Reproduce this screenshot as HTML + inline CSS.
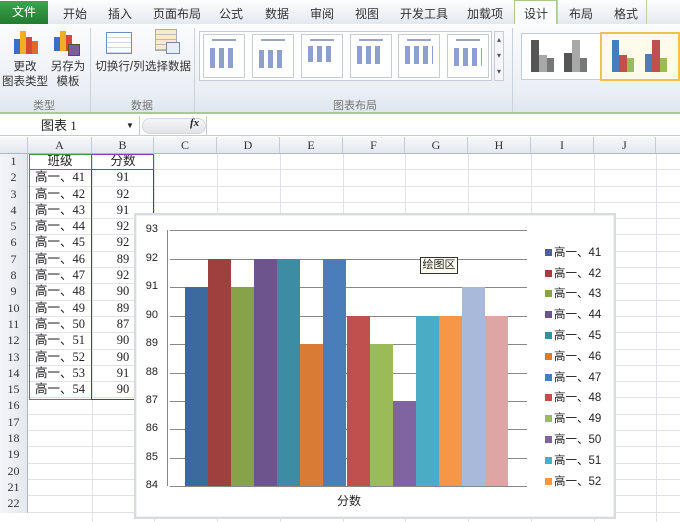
<!DOCTYPE html>
<html><head><meta charset="utf-8"><style>
*{margin:0;padding:0;box-sizing:border-box}
body{width:680px;height:522px;overflow:hidden;background:#fff;font-family:"Liberation Sans","Noto Sans CJK SC",sans-serif;font-size:12px;color:#222;position:relative}
.a{position:absolute}
.tab{position:absolute;top:5px;font-size:12px;color:#333}
.rib{position:absolute;left:0;top:24px;width:680px;height:90px;background:linear-gradient(#fbfcfd,#e9eef4 80%,#dfe6ee);border-bottom:2px solid #a9c98f}
.gl{position:absolute;top:73px;font-size:11px;color:#777}
.sep{position:absolute;top:4px;width:1px;height:84px;background:#c9d3de}
.lbl{position:absolute;font-size:11.5px;color:#333;text-align:center;line-height:15px;white-space:nowrap}
.thumb{position:absolute;top:10px;width:42px;height:44px;background:#fff;border:1px solid #c5ccd6}
.tt{position:absolute;height:2px;background:#9aa6c0}
.colh{position:absolute;top:137px;height:17px;background:linear-gradient(#f6f8fa,#e4e9ef);border-right:1px solid #c4ccd6;border-bottom:1px solid #aeb8c4;text-align:center;font-family:"Liberation Serif",serif;font-size:12px;line-height:17px;color:#333}
.rows{position:absolute;left:0;top:154px;width:680px}
.r{height:16.3px;border-bottom:1px solid #dfe3e8;position:relative;font-size:12.5px;line-height:15px;font-family:"Liberation Serif","Noto Sans CJK SC",serif}
.rh{position:absolute;left:0;top:0;width:28px;height:16.3px;background:linear-gradient(90deg,#f3f5f8,#e4e9ef);border-right:1px solid #aeb8c4;text-align:center;font-size:12px;color:#333}
.ca{position:absolute;left:28px;width:64px;text-align:center}
.cb{position:absolute;left:92px;width:62px;text-align:center}
.vl{position:absolute;top:154px;width:1px;height:368px;background:#dfe3e8}
.bar{position:absolute;width:23px}
.yl{position:absolute;left:140px;width:18px;text-align:right;font-size:11px;color:#222}
.hl{position:absolute;left:170px;width:357px;height:1px;background:#888}
.lg{position:absolute;left:545px;font-size:11.5px;color:#222}
.lg i{display:inline-block;width:7px;height:7px;margin-right:2px;vertical-align:0px}
</style></head><body>
<div class="a" style="left:0;top:0;width:680px;height:25px;background:linear-gradient(#fdfdfe,#e4e9ef);border-bottom:1px solid #b9c9a8"></div>
<div class="a" style="left:0;top:1px;width:48px;height:24px;background:linear-gradient(#3fa34c,#1f7a2e);color:#fff;text-align:center;line-height:22px;font-size:12px">文件</div>
<div class="tab" style="left:63px">开始</div>
<div class="tab" style="left:108px">插入</div>
<div class="tab" style="left:153px">页面布局</div>
<div class="tab" style="left:219px">公式</div>
<div class="tab" style="left:265px">数据</div>
<div class="tab" style="left:310px">审阅</div>
<div class="tab" style="left:355px">视图</div>
<div class="tab" style="left:400px">开发工具</div>
<div class="tab" style="left:467px">加载项</div>
<div class="a" style="left:514px;top:0;width:43px;height:26px;background:#fafcfd;border:1px solid #a9c98f;border-bottom:none"></div>
<div class="tab" style="left:524px">设计</div>
<div class="tab" style="left:569px">布局</div>
<div class="tab" style="left:614px">格式</div>
<div class="a" style="left:557px;top:0;width:1px;height:24px;background:#b9d6a8"></div>
<div class="a" style="left:646px;top:0;width:1px;height:24px;background:#b9d6a8"></div>
<div class="rib">
 <div class="a" style="left:14px;top:5px"><div class="a" style="left:0;top:10px;width:6px;height:15px;background:#3a6fc4"></div><div class="a" style="left:6px;top:2px;width:6px;height:23px;background:#f0b020"></div><div class="a" style="left:12px;top:8px;width:6px;height:17px;background:#d9492e"></div><div class="a" style="left:18px;top:12px;width:6px;height:13px;background:#e46a2a"></div></div>
 <div class="lbl" style="left:0px;top:36px;width:50px">更改<br>图表类型</div>
 <div class="a" style="left:54px;top:5px"><div class="a" style="left:0;top:8px;width:6px;height:14px;background:#3a6fc4"></div><div class="a" style="left:6px;top:2px;width:6px;height:20px;background:#f0b020"></div><div class="a" style="left:12px;top:6px;width:6px;height:16px;background:#d9492e"></div><div class="a" style="left:14px;top:15px;width:12px;height:12px;background:#7a5ea0;border:1px solid #553"></div></div>
 <div class="lbl" style="left:48px;top:36px;width:40px">另存为<br>模板</div>
 <div class="gl" style="left:33px">类型</div>
 <div class="sep" style="left:90px"></div>
 <div class="a" style="left:106px;top:8px;width:26px;height:22px;border:1px solid #6b8fb8;background:repeating-linear-gradient(#fff 0 4px,#c9d8ea 4px 5px)"></div>
 <div class="a" style="left:155px;top:5px;width:22px;height:22px;border:1px solid #aab;background:repeating-linear-gradient(#fde9cc 0 4px,#bbb 4px 5px)"></div>
 <div class="a" style="left:166px;top:18px;width:14px;height:12px;border:1px solid #789;background:#e6eef8"></div>
 <div class="lbl" style="left:95px;top:36px;width:50px">切换行/列</div>
 <div class="lbl" style="left:145px;top:36px;width:45px">选择数据</div>
 <div class="gl" style="left:131px">数据</div>
 <div class="sep" style="left:194px"></div>
 <div class="a" style="left:199px;top:7px;width:293px;height:50px;background:#fff;border:1px solid #c5ccd6"></div>
 <div class="thumb" style="left:203px"></div><div class="thumb" style="left:252px"></div><div class="thumb" style="left:301px"></div><div class="thumb" style="left:350px"></div><div class="thumb" style="left:398px"></div><div class="thumb" style="left:447px"></div>
 <div class="tt" style="left:212px;top:15px;width:24px"></div><div class="tt" style="left:261px;top:15px;width:24px"></div><div class="tt" style="left:310px;top:15px;width:24px"></div><div class="tt" style="left:359px;top:15px;width:24px"></div><div class="tt" style="left:407px;top:15px;width:24px"></div><div class="tt" style="left:456px;top:15px;width:24px"></div>
 <div class="a" style="left:210px;top:24px;width:24px;height:20px;background:repeating-linear-gradient(90deg,#8ea0cf 0 5px,#fff 5px 9px)"></div>
 <div class="a" style="left:259px;top:26px;width:26px;height:18px;background:repeating-linear-gradient(90deg,#8ea0cf 0 5px,#fff 5px 9px)"></div>
 <div class="a" style="left:308px;top:22px;width:26px;height:16px;background:repeating-linear-gradient(90deg,#8ea0cf 0 5px,#fff 5px 9px)"></div>
 <div class="a" style="left:357px;top:22px;width:26px;height:18px;background:repeating-linear-gradient(90deg,#8ea0cf 0 5px,#fff 5px 9px)"></div>
 <div class="a" style="left:405px;top:22px;width:28px;height:18px;background:repeating-linear-gradient(90deg,#8ea0cf 0 5px,#fff 5px 9px)"></div>
 <div class="a" style="left:454px;top:24px;width:28px;height:18px;background:repeating-linear-gradient(90deg,#8ea0cf 0 5px,#fff 5px 9px)"></div>
 <div class="a" style="left:494px;top:7px;width:10px;height:50px;border:1px solid #c5ccd6;background:#f4f6f9;font-size:8px;text-align:center;line-height:16px;color:#555">▴<br>▾<br>▾</div>
 <div class="gl" style="left:333px">图表布局</div>
 <div class="sep" style="left:512px"></div>
 <div class="a" style="left:521px;top:9px;width:159px;height:47px;background:#fff;border:1px solid #c5ccd6"></div>
 <div class="a" style="left:600px;top:8px;width:80px;height:49px;border:2px solid #f2c34a;background:#fffbea"></div>
 <div class="a" style="left:531px;top:16px;width:8px;height:32px;background:#555"></div><div class="a" style="left:539px;top:31px;width:8px;height:17px;background:#a8a8a8"></div><div class="a" style="left:547px;top:34px;width:7px;height:14px;background:#777"></div>
 <div class="a" style="left:564px;top:29px;width:8px;height:19px;background:#555"></div><div class="a" style="left:572px;top:16px;width:8px;height:32px;background:#a8a8a8"></div><div class="a" style="left:580px;top:34px;width:7px;height:14px;background:#777"></div>
 <div class="a" style="left:612px;top:16px;width:7px;height:32px;background:#4a7ebb"></div><div class="a" style="left:619px;top:31px;width:8px;height:17px;background:#c0504d"></div><div class="a" style="left:627px;top:34px;width:7px;height:14px;background:#9bbb59"></div>
 <div class="a" style="left:645px;top:30px;width:7px;height:18px;background:#4a7ebb"></div><div class="a" style="left:652px;top:16px;width:8px;height:32px;background:#c0504d"></div><div class="a" style="left:660px;top:34px;width:7px;height:14px;background:#9bbb59"></div>
</div>
<div class="a" style="left:0;top:116px;width:680px;height:20px;background:#fff;border-bottom:1px solid #c4ccd6"></div>
<div class="a" style="left:0;top:116px;width:140px;height:19px;border-right:1px solid #c4ccd6;font-family:'Liberation Serif','Noto Sans CJK SC',serif;font-size:13px;line-height:19px;padding-left:41px">图表 1<span style="position:absolute;left:126px;font-size:8px">▼</span></div>
<div class="a" style="left:142px;top:118px;width:64px;height:16px;border-radius:8px;background:linear-gradient(#f4f5f7,#e1e4e8);border:1px solid #d5d8dd"></div>
<div class="a" style="left:190px;top:117px;font-family:'Liberation Serif',serif;font-style:italic;font-weight:bold;font-size:11px">fx</div>
<div class="a" style="left:206px;top:116px;width:1px;height:20px;background:#c4ccd6"></div>
<div class="colh" style="left:0;width:28px"></div>
<div class="colh" style="left:28px;width:64px">A</div>
<div class="colh" style="left:92px;width:62px">B</div>
<div class="colh" style="left:154px;width:63px">C</div>
<div class="colh" style="left:217px;width:63px">D</div>
<div class="colh" style="left:280px;width:63px">E</div>
<div class="colh" style="left:343px;width:62px">F</div>
<div class="colh" style="left:405px;width:63px">G</div>
<div class="colh" style="left:468px;width:63px">H</div>
<div class="colh" style="left:531px;width:63px">I</div>
<div class="colh" style="left:594px;width:62px">J</div>
<div class="colh" style="left:656px;width:30px"></div>
<div class="vl" style="left:92px"></div><div class="vl" style="left:154px"></div><div class="vl" style="left:217px"></div><div class="vl" style="left:280px"></div><div class="vl" style="left:343px"></div><div class="vl" style="left:405px"></div><div class="vl" style="left:468px"></div><div class="vl" style="left:531px"></div><div class="vl" style="left:594px"></div><div class="vl" style="left:656px"></div>
<div class="rows">
<div class="r"><div class="rh">1</div><div class="ca">班级</div><div class="cb">分数</div></div>
<div class="r"><div class="rh">2</div><div class="ca">高一、41</div><div class="cb">91</div></div>
<div class="r"><div class="rh">3</div><div class="ca">高一、42</div><div class="cb">92</div></div>
<div class="r"><div class="rh">4</div><div class="ca">高一、43</div><div class="cb">91</div></div>
<div class="r"><div class="rh">5</div><div class="ca">高一、44</div><div class="cb">92</div></div>
<div class="r"><div class="rh">6</div><div class="ca">高一、45</div><div class="cb">92</div></div>
<div class="r"><div class="rh">7</div><div class="ca">高一、46</div><div class="cb">89</div></div>
<div class="r"><div class="rh">8</div><div class="ca">高一、47</div><div class="cb">92</div></div>
<div class="r"><div class="rh">9</div><div class="ca">高一、48</div><div class="cb">90</div></div>
<div class="r"><div class="rh">10</div><div class="ca">高一、49</div><div class="cb">89</div></div>
<div class="r"><div class="rh">11</div><div class="ca">高一、50</div><div class="cb">87</div></div>
<div class="r"><div class="rh">12</div><div class="ca">高一、51</div><div class="cb">90</div></div>
<div class="r"><div class="rh">13</div><div class="ca">高一、52</div><div class="cb">90</div></div>
<div class="r"><div class="rh">14</div><div class="ca">高一、53</div><div class="cb">91</div></div>
<div class="r"><div class="rh">15</div><div class="ca">高一、54</div><div class="cb">90</div></div>
<div class="r"><div class="rh">16</div></div><div class="r"><div class="rh">17</div></div><div class="r"><div class="rh">18</div></div><div class="r"><div class="rh">19</div></div><div class="r"><div class="rh">20</div></div><div class="r"><div class="rh">21</div></div><div class="r"><div class="rh">22</div></div>
</div>
<div class="a" style="left:29px;top:154px;width:63px;height:16px;border:1px solid #3a9a3a;border-right:none"></div>
<div class="a" style="left:29px;top:170px;width:63px;height:230px;border:1px solid #3a9a3a;border-right:none;border-top:none"></div>
<div class="a" style="left:91px;top:154px;width:63px;height:16px;border:1px solid #8a3bc4"></div>
<div class="a" style="left:91px;top:170px;width:63px;height:230px;border:1px solid #3a3ac4;border-top:none"></div>
<div class="a" style="left:134px;top:213px;width:482px;height:306px;border:2px solid #d8dbe0;background:#fff;box-shadow:inset 0 0 0 1px #eef0f2"></div>
<div class="a" style="left:167px;top:230px;width:1px;height:256px;background:#888"></div>
<div class="hl" style="top:230px"></div><div class="hl" style="top:259px"></div><div class="hl" style="top:287px"></div><div class="hl" style="top:316px"></div><div class="hl" style="top:344px"></div><div class="hl" style="top:373px"></div><div class="hl" style="top:401px"></div><div class="hl" style="top:429px"></div><div class="hl" style="top:458px"></div><div class="hl" style="top:486px"></div>
<div class="yl" style="top:223px">93</div><div class="yl" style="top:252px">92</div><div class="yl" style="top:280px">91</div><div class="yl" style="top:309px">90</div><div class="yl" style="top:337px">89</div><div class="yl" style="top:366px">88</div><div class="yl" style="top:394px">87</div><div class="yl" style="top:422px">86</div><div class="yl" style="top:451px">85</div><div class="yl" style="top:479px">84</div>
<div class="bar" style="left:185px;top:287px;height:199px;background:#3c6a9e"></div>
<div class="bar" style="left:208px;top:259px;height:227px;background:#a0403e"></div>
<div class="bar" style="left:231px;top:287px;height:199px;background:#87a34a"></div>
<div class="bar" style="left:254px;top:259px;height:227px;background:#6e548d"></div>
<div class="bar" style="left:277px;top:259px;height:227px;background:#3c8da3"></div>
<div class="bar" style="left:300px;top:344px;height:142px;background:#d97b34"></div>
<div class="bar" style="left:323px;top:259px;height:227px;background:#4a7ebb"></div>
<div class="bar" style="left:347px;top:316px;height:170px;background:#c0504d"></div>
<div class="bar" style="left:370px;top:344px;height:142px;background:#9bbb59"></div>
<div class="bar" style="left:393px;top:401px;height:85px;background:#8064a2"></div>
<div class="bar" style="left:416px;top:316px;height:170px;background:#4bacc6"></div>
<div class="bar" style="left:439px;top:316px;height:170px;background:#f79646"></div>
<div class="bar" style="left:462px;top:287px;height:199px;background:#a9b9da"></div>
<div class="bar" style="left:485px;top:316px;height:170px;background:#dda5a4"></div>
<div class="a" style="left:420px;top:257px;width:38px;height:17px;border:1px solid #333;background:#fffff0;font-size:11px;line-height:15px;text-align:center">绘图区</div>
<div class="a" style="left:337px;top:492px;font-size:12px">分数</div>
<div class="lg" style="top:244px"><i style="background:#4f5f9e"></i>高一、41</div>
<div class="lg" style="top:265px"><i style="background:#a0403e"></i>高一、42</div>
<div class="lg" style="top:285px"><i style="background:#87a34a"></i>高一、43</div>
<div class="lg" style="top:306px"><i style="background:#6e548d"></i>高一、44</div>
<div class="lg" style="top:327px"><i style="background:#3c8da3"></i>高一、45</div>
<div class="lg" style="top:348px"><i style="background:#d97b34"></i>高一、46</div>
<div class="lg" style="top:369px"><i style="background:#4a7ebb"></i>高一、47</div>
<div class="lg" style="top:389px"><i style="background:#c0504d"></i>高一、48</div>
<div class="lg" style="top:410px"><i style="background:#9bbb59"></i>高一、49</div>
<div class="lg" style="top:431px"><i style="background:#8064a2"></i>高一、50</div>
<div class="lg" style="top:452px"><i style="background:#4bacc6"></i>高一、51</div>
<div class="lg" style="top:473px"><i style="background:#f79646"></i>高一、52</div>
</body></html>
